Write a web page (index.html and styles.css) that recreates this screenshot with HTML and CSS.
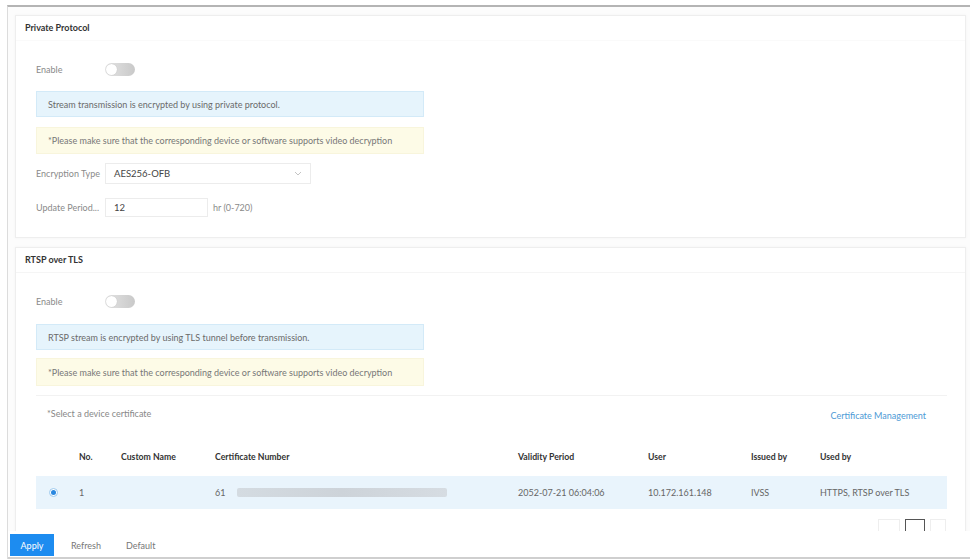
FILE: index.html
```html
<!DOCTYPE html>
<html>
<head>
<meta charset="utf-8">
<link rel="stylesheet" href="styles.css">
</head>
<body>
<div class="frame">
  <div class="content">
    <section class="card card-1">
      <div class="card-head">Private Protocol</div>
      <div class="card-body">
        <div class="row row-enable">
          <span class="label">Enable</span>
          <span class="toggle"><span class="knob"></span></span>
        </div>
        <div class="note note-info">Stream transmission is encrypted by using private protocol.</div>
        <div class="note note-warn">*Please make sure that the corresponding device or software supports video decryption</div>
        <div class="row row-enc">
          <span class="label">Encryption Type</span>
          <span class="select"><span>AES256-OFB</span>
            <svg width="8" height="5" viewBox="0 0 8 5"><path d="M1 1l3 3 3-3" fill="none" stroke="#c4c4c4" stroke-width="1"/></svg>
          </span>
        </div>
        <div class="row row-period">
          <span class="label">Update Period...</span>
          <span class="input">12</span>
          <span class="unit">hr (0-720)</span>
        </div>
      </div>
    </section>

    <section class="card card-2">
      <div class="card-head">RTSP over TLS</div>
      <div class="card-body">
        <div class="row row-enable2">
          <span class="label">Enable</span>
          <span class="toggle"><span class="knob"></span></span>
        </div>
        <div class="note note-info info2">RTSP stream is encrypted by using TLS tunnel before transmission.</div>
        <div class="note note-warn warn2">*Please make sure that the corresponding device or software supports video decryption</div>
        <div class="cert">
          <div class="cert-bar">
            <span class="cert-hint">*Select a device certificate</span>
            <span class="cert-link">Certificate Management</span>
          </div>
          <div class="grid grid-head">
            <span></span><span>No.</span><span>Custom Name</span><span>Certificate Number</span><span>Validity Period</span><span>User</span><span>Issued by</span><span>Used by</span>
          </div>
          <div class="grid grid-row">
            <span class="radio"><span class="dot"></span></span><span>1</span><span></span><span class="certno">61<span class="blur"></span></span><span>2052-07-21 06:04:06</span><span>10.172.161.148</span><span>IVSS</span><span>HTTPS, RTSP over TLS</span>
          </div>
          <div class="pager">
            <span class="pg pg-prev"></span><span class="pg pg-cur"></span><span class="pg pg-next"></span>
          </div>
        </div>
      </div>
    </section>
  </div>
  <div class="footer">
    <span class="btn-apply">Apply</span>
    <span class="btn-text">Refresh</span>
    <span class="btn-text">Default</span>
  </div>
</div>
</body>
</html>
```

FILE: styles.css
```css
* { box-sizing: border-box; }
html, body { margin: 0; padding: 0; background: #fff; }
body {
  font-family: Lato, "Open Sans", "Liberation Sans", sans-serif;
  font-size: 9px;
  color: #555;
  height: 559px;
  overflow: hidden;
}
.frame {
  margin: 5px 0 0 7px;
  height: 554px;
  border-top: 2px solid #b4b4b4;
  border-left: 1px solid #dcdcdc;
  display: flex;
  flex-direction: column;
}
.content {
  flex: 1;
  overflow: hidden;
  padding: 8px 4px 0 7px;
  background: #fcfcfc;
}
.card {
  background: #fff;
  border: 1px solid #eeeeee;
  box-shadow: 0 0 3px rgba(0,0,0,0.04);
}
.card-1 { height: 223px; }
.card-2 { margin-top: 9px; height: 400px; }
.card-head {
  height: 25px;
  line-height: 24px;
  padding-left: 9px;
  font-weight: 700;
  color: #333;
  font-size: 9px;
  border-bottom: 1px solid #f5f5f5;
}
.card-1 .card-head { border-bottom-color: #fafafa; }
.card-body { padding-left: 20px; }
.row { display: flex; align-items: center; height: 20px; }
.label { width: 69px; color: #8a8a8a; white-space: nowrap; overflow: hidden; }
.row-enable { margin-top: 18px; }
.row-enable2 { margin-top: 18px; }
.toggle {
  width: 30px; height: 13px; border-radius: 7px;
  background: linear-gradient(90deg, #e4e4e4, #c9c9c9);
  position: relative;
  display: inline-block;
}
.knob {
  position: absolute; left: 1px; top: 1px;
  width: 11px; height: 11px; border-radius: 50%;
  background: #fff;
  box-shadow: 0 0 1px rgba(0,0,0,0.2);
}
.note {
  width: 388px;
  padding-left: 11px;
  display: flex; align-items: center;
  color: #6a6a6a;
}
.note-info {
  margin-top: 12px; height: 26px;
  background: #e6f4fc; border: 1px solid #d3eaf8;
}
.note-warn {
  margin-top: 10px; height: 27px;
  background: #fdfbe7; border: 1px solid #f8f5dc;
  color: #777;
}
.info2 { margin-top: 13px; }
.warn2 { margin-top: 8px; height: 28px; }
.row-enc { margin-top: 9px; height: 21px; }
.select {
  width: 206px; height: 21px;
  border: 1px solid #ececec;
  display: flex; align-items: center; justify-content: space-between;
  padding: 0 8px 0 8px;
  color: #444; font-size: 9.5px;
}
.row-period { margin-top: 14px; height: 19px; }
.input {
  width: 103px; height: 19px;
  border: 1px solid #ececec;
  padding-left: 8px;
  display: flex; align-items: center;
  color: #444; font-size: 9.5px;
}
.unit { margin-left: 5px; color: #8a8a8a; }
.cert {
  margin-top: 9px;
  width: 911px;
  border-top: 1px solid #f2f2f2;
}
.cert-bar {
  height: 40px;
  display: flex; justify-content: space-between; align-items: flex-start;
  padding: 12px 21px 0 11px;
}
.cert-hint { color: #888; }
.cert-link { color: #4d9ad6; margin-top: 2px; }
.grid {
  display: grid;
  grid-template-columns: 34px 42px 94px 303px 130px 103px 69px 1fr;
  align-items: center;
}
.grid > span { padding-left: 9px; white-space: nowrap; }
.grid > span:first-child { padding-left: 0; }
.grid-head { height: 40px; font-weight: 700; color: #333; font-size: 8.7px; padding-top: 1px; }
.grid-row { height: 33px; background: #e9f4fc; color: #666; }
.radio {
  justify-self: center;
  width: 9px; height: 9px; border-radius: 50%;
  border: 1px solid #9cc9ee; background: #fff;
  display: flex; align-items: center; justify-content: center;
}
.dot { width: 5px; height: 5px; border-radius: 50%; background: #2a88e0; }
.certno { display: flex; align-items: center; }
.blur {
  display: inline-block; width: 210px; height: 9px; margin-left: 12px;
  background: linear-gradient(90deg, #d4dbe1, #cdd3d9 50%, #d6dce2);
  border-radius: 2px;
}
.pager {
  display: flex; justify-content: flex-end; gap: 5px;
  margin-top: 10px;
  padding-right: 1px;
}
.pg { width: 16px; height: 13px; border: 1px solid #eee; border-bottom: none; }
.pg-prev { width: 22px; }
.pg-cur { width: 20px; border: 1px solid #555; border-bottom: none; }
.footer {
  height: 28px;
  background: #fff;
  border-bottom: 2px solid #cfcfcf;
  display: flex; align-items: flex-start;
  padding: 3px 0 0 2px;
  position: relative;
}
.btn-apply {
  width: 44px; height: 22px;
  background: #1d8cf0; color: #fff;
  display: flex; align-items: center; justify-content: center;
}
.btn-text {
  height: 22px; display: flex; align-items: center;
  color: #777; margin-left: 17px;
}
.btn-text + .btn-text { margin-left: 25px; }
```
